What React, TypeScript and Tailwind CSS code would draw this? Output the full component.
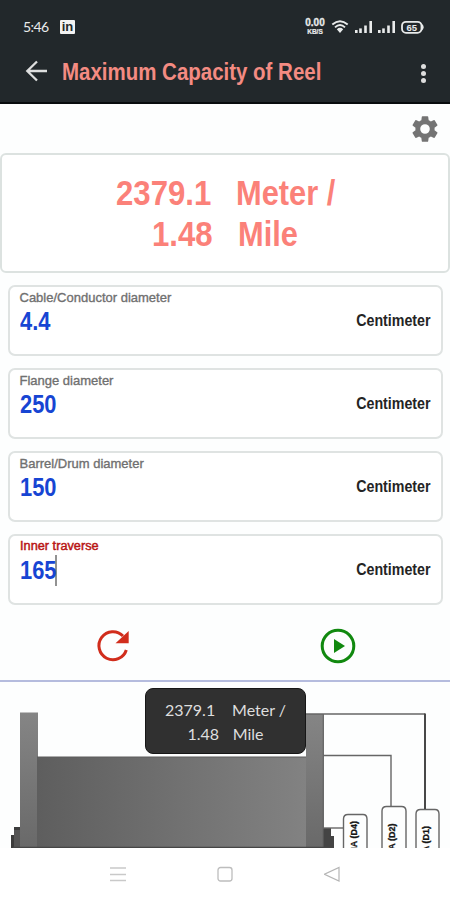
import React from 'react';

function StatusBar() {
  return (
    <div className="flex h-[42px] items-end justify-between pl-[23px] pr-[21px] pb-[5px] text-[#e9ebeb]">
      <div className="flex h-[20px] items-center gap-[10px]">
        <span className="w-[27px] whitespace-nowrap font-['Lato',sans-serif] text-[14px] leading-[20px] tracking-[-0.6px]">5:46</span>
        <span className="mt-[-1px] flex h-[14px] w-[15px] items-center justify-center rounded-[1px] bg-[#f2f2f2] font-['Liberation_Sans',sans-serif] text-[13px] font-bold leading-none text-[#22282b]">in</span>
      </div>
      <div className="flex h-[20px] items-center">
        <div className="mt-[-1px] flex w-[22px] flex-col items-center font-['Liberation_Sans',sans-serif] font-bold">
          <span className="text-[10px] leading-[10px] [-webkit-text-stroke:0.3px_#e9ebeb]">0.00</span>
          <span className="text-[6.5px] leading-[7px] [-webkit-text-stroke:0.2px_#e9ebeb]">KB/S</span>
        </div>
        <svg className="ml-[5px]" width="98" height="16" viewBox="0 0 98 16">
          <g fill="none" stroke="#e9ebeb" strokeWidth="1.9">
            <path d="M1.3 5.5Q9 -1.200 16.700 5.500" />
            <path d="M4 8.400Q9 3.800 14 8.400" />
          </g>
          <path d="M5.800 10.200Q9 7.400 12.200 10.200L9 14Z" fill="#e9ebeb" />
          <g fill="#e9ebeb">
            <rect x="24" y="11" width="2.600" height="3" />
            <rect x="28.200" y="9.400" width="2.600" height="4.600" />
            <rect x="33.200" y="6.500" width="2.600" height="7.500" />
            <rect x="38.400" y="2" width="2.600" height="12" />
            <rect x="47" y="11" width="2.600" height="3" />
            <rect x="51.200" y="9.400" width="2.600" height="4.600" />
            <rect x="56.200" y="6.500" width="2.600" height="7.500" />
            <rect x="61.400" y="2" width="2.600" height="12" />
            <path d="M90.500 4.500Q95 8.200 90.500 12Z" />
          </g>
          <rect x="71" y="2.800" width="19.500" height="11" rx="4" fill="none" stroke="#e9ebeb" strokeWidth="1.800" />
          <text x="80.700" y="11.700" textAnchor="middle" fontFamily="Liberation Sans, sans-serif" fontSize="9.500" fontWeight="700" fill="#e9ebeb">65</text>
        </svg>
      </div>
    </div>
  );
}

function Field({ label, value, active = false }: { label: string; value: string; active?: boolean }) {
  return (
    <div className="flex h-[71px] w-[435px] justify-between rounded-[7px] border-2 border-[#dfe3e2] bg-white pl-[9.5px] pr-[10px]">
      <div className="flex flex-col pt-[3px]">
        <span
          className={
            active
              ? 'origin-left scale-x-[1.02] whitespace-nowrap text-[12.5px] leading-[15px] text-[#b81414] [-webkit-text-stroke:0.45px_#b81414]'
              : 'whitespace-nowrap text-[13px] leading-[15px] text-[#707070] [-webkit-text-stroke:0.35px_#707070]'
          }
        >
          {label}
        </span>
        <div className="flex h-[33px] items-center">
          <span className="origin-left scale-x-[0.875] text-[25px] font-bold leading-[33px] text-[#1745d3]">{value}</span>
          {active && <span className="ml-[-6px] h-[31px] w-[2px] bg-[#929292]" />}
        </div>
      </div>
      <span className="mt-[24px] h-[20px] origin-right scale-x-[0.89] text-[16px] font-bold leading-[20px] text-[#242424]">Centimeter</span>
    </div>
  );
}

function ReelDrawing() {
  return (
    <svg className="block" width="450" height="166" viewBox="0 682 450 166">
      <defs>
        <linearGradient id="barrel" x1="0" x2="1" y1="0" y2="0">
          <stop offset="0" stopColor="#5e5e5e" />
          <stop offset="0.5" stopColor="#707070" />
          <stop offset="1" stopColor="#828282" />
        </linearGradient>
        <linearGradient id="flange" x1="0" x2="0" y1="0" y2="1">
          <stop offset="0" stopColor="#858585" />
          <stop offset="1" stopColor="#696969" />
        </linearGradient>
      </defs>
      <path d="M11 835H14V827H21V848H11Z" fill="#3c3c3c" />
      <path d="M14 830H21V848H14Z" fill="#555" />
      <rect x="20" y="712.5" width="18" height="135.5" fill="url(#flange)" />
      <rect x="37" y="757" width="269" height="91" fill="url(#barrel)" />
      <path d="M37 757H306" stroke="#5c5c5c" />
      <path d="M323 828H331V836H334V848H323Z" fill="#444" />
      <rect x="306" y="714" width="17.5" height="134" fill="url(#flange)" />
      <path d="M323.3 714V848" stroke="#555" />
      <path d="M13 847.4H334" stroke="#454545" strokeWidth="1.2" />
      <g fill="none" stroke="#666" strokeWidth="1.4">
        <path d="M306 714H425" />
        <path d="M323 755.5H391V806" />
        <path d="M323 828H344" />
        <path d="M343.5 849V819Q343.5 814.5 348 814.5H363Q367 814.5 367 819V849" />
        <path d="M382 849V811Q382 806.5 386.5 806.5H401.500Q406 806.5 406 811V849" />
        <path d="M416 849V814Q416 809.5 420.500 809.5H435Q439 809.5 439 814V849" />
      </g>
      <path d="M425 713.500V809" stroke="#484848" strokeWidth="2" />
      <g fontFamily="Liberation Sans, sans-serif" fontSize="9" fontWeight="700" fill="#151515" stroke="#151515" strokeWidth="0.3">
        <text transform="translate(356.500 821) rotate(-90)" textAnchor="end">IA (D4)</text>
        <text transform="translate(395 823.500) rotate(-90)" textAnchor="end">IA (D2)</text>
        <text transform="translate(429 826) rotate(-90)" textAnchor="end">A (D1)</text>
      </g>
    </svg>
  );
}

export default function App() {
  return (
    <div className="flex h-[900px] w-[450px] flex-col overflow-hidden bg-[#fdfefe] font-['Liberation_Sans',sans-serif]">
      <header className="h-[104px] shrink-0 border-b-[2px] border-[#080c0e] bg-[#22282b]">
        <StatusBar />
        <div className="flex h-[60px] items-center pl-[25px] pr-[23px]">
          <svg width="23" height="22" viewBox="0 0 23 22" className="mt-[-3px]" fill="none" stroke="#dedfdf" strokeWidth="2.3">
            <path d="M22 11H2.500M12 1.500L2.300 11L12 20.500" />
          </svg>
          <h1 className="ml-[13.500px] w-[260px] origin-left scale-x-[0.89] whitespace-nowrap text-[23px] font-bold leading-[30px] text-[#f48b82]">
            Maximum Capacity of Reel
          </h1>
          <div className="ml-auto mt-[3px] flex w-[6px] flex-col gap-[2px]">
            <span className="h-[5.300px] w-[5.300px] rounded-full bg-[#dedede]" />
            <span className="h-[5.300px] w-[5.300px] rounded-full bg-[#dedede]" />
            <span className="h-[5.300px] w-[5.300px] rounded-full bg-[#dedede]" />
          </div>
        </div>
      </header>
      <div className="flex h-[49px] shrink-0 items-center justify-end pr-[9px]">
        <svg width="32" height="32" viewBox="0 0 24 24" fill="#747474">
          <path d="M19.140 12.940c.04-.3.06-.61.06-.94s-.02-.64-.07-.94l2.030-1.580a.49.49 0 0 0 .12-.61l-1.920-3.320a.49.49 0 0 0-.59-.22l-2.390.96a7 7 0 0 0-1.620-.94l-.36-2.540A.48.48 0 0 0 13.920 2.400h-3.840a.48.48 0 0 0-.47.41l-.36 2.540c-.59.24-1.130.57-1.620.94l-2.390-.96a.48.48 0 0 0-.59.22L2.740 8.870a.48.48 0 0 0 .12.610l2.030 1.580c-.05.3-.09.630-.09.940s.02.640.07.940l-2.030 1.580a.49.490 0 0 0-.12.610l1.920 3.320c.12.220.370.290.590.220l2.390-.960c.5.380 1.030.700 1.620.940l.36 2.540c.05.240.240.410.480.410h3.840c.240 0 .440-.170.470-.410l.360-2.540c.590-.240 1.130-.560 1.620-.940l2.390.960c.220.080.470 0 .590-.220l1.920-3.320a.480.480 0 0 0-.12-.610zM12 15.600a3.600 3.600 0 1 1 0-7.200 3.600 3.600 0 0 1 0 7.200z" />
        </svg>
      </div>
      <section className="flex h-[120px] shrink-0 flex-col items-center rounded-[6px] border-[2px] border-[#dce2e0] bg-white pt-[17px] text-[35px] font-bold leading-[41px] text-[#fb8179]">
        <div className="flex w-[219px] justify-between">
          <span className="w-[96px] origin-left scale-x-[0.89] whitespace-nowrap">2379.1</span>
          <span className="w-[99px] origin-left scale-x-[0.88] whitespace-nowrap">Meter /</span>
        </div>
        <div className="flex w-[147px] justify-between">
          <span className="w-[62px] origin-left scale-x-[0.89] whitespace-nowrap">1.48</span>
          <span className="w-[61px] origin-left scale-x-[0.88] whitespace-nowrap">Mile</span>
        </div>
      </section>
      <main className="flex shrink-0 flex-col gap-[12px] pl-[8px] pt-[12px]">
        <Field label="Cable/Conductor diameter" value="4.4" />
        <Field label="Flange diameter" value="250" />
        <Field label="Barrel/Drum diameter" value="150" />
        <Field label="Inner traverse" value="165" active />
      </main>
      <div className="flex min-h-0 flex-1 items-center justify-between border-b-[2px] border-[#b5bcde] pl-[96px] pr-[94px] pt-[6px]">
        <svg width="34" height="34" viewBox="0 0 34 34">
          <path d="M30.300 21A14 14 0 1 1 27 7" fill="none" stroke="#d12d1c" strokeWidth="3" />
          <path d="M32.700 2V14.300H19.500Z" fill="#d12d1c" />
        </svg>
        <svg width="36" height="36" viewBox="0 0 36 36">
          <circle cx="18" cy="18" r="15.800" fill="none" stroke="#11890f" strokeWidth="3" />
          <path d="M14 11V25L25 18Z" fill="#11890f" />
        </svg>
      </div>
      <section className="relative h-[166px] shrink-0">
        <ReelDrawing />
        <div className="absolute left-[145px] top-[6px] flex h-[66px] w-[161px] flex-col items-center rounded-[8px] border border-[#171717] bg-[#303030] pt-[9px] font-['Lato',sans-serif] text-[16px] leading-[24px] text-[#dedede]">
          <div className="flex w-[121px] justify-between whitespace-nowrap">
            <span>2379.1</span>
            <span>Meter /</span>
          </div>
          <div className="flex w-[76px] justify-between whitespace-nowrap">
            <span>1.48</span>
            <span>Mile</span>
          </div>
        </div>
      </section>
      <nav className="flex h-[52px] shrink-0 items-center justify-between bg-white pl-[110px] pr-[110px]">
        <svg width="16" height="16" viewBox="0 0 16 16" stroke="#c9c9c9" strokeWidth="1.300">
          <path d="M0 2H16M0 8.500H16M0 14.500H16" />
        </svg>
        <svg width="16" height="16" viewBox="0 0 16 16" fill="none" stroke="#bdbdbd" strokeWidth="1.300">
          <rect x="1" y="1.500" width="14" height="13.500" rx="2.500" />
        </svg>
        <svg width="16" height="16" viewBox="0 0 16 16" fill="none" stroke="#b5b5b5" strokeWidth="1.200">
          <path d="M15 1.500V15L0.500 8.300Z" />
        </svg>
      </nav>
    </div>
  );
}
